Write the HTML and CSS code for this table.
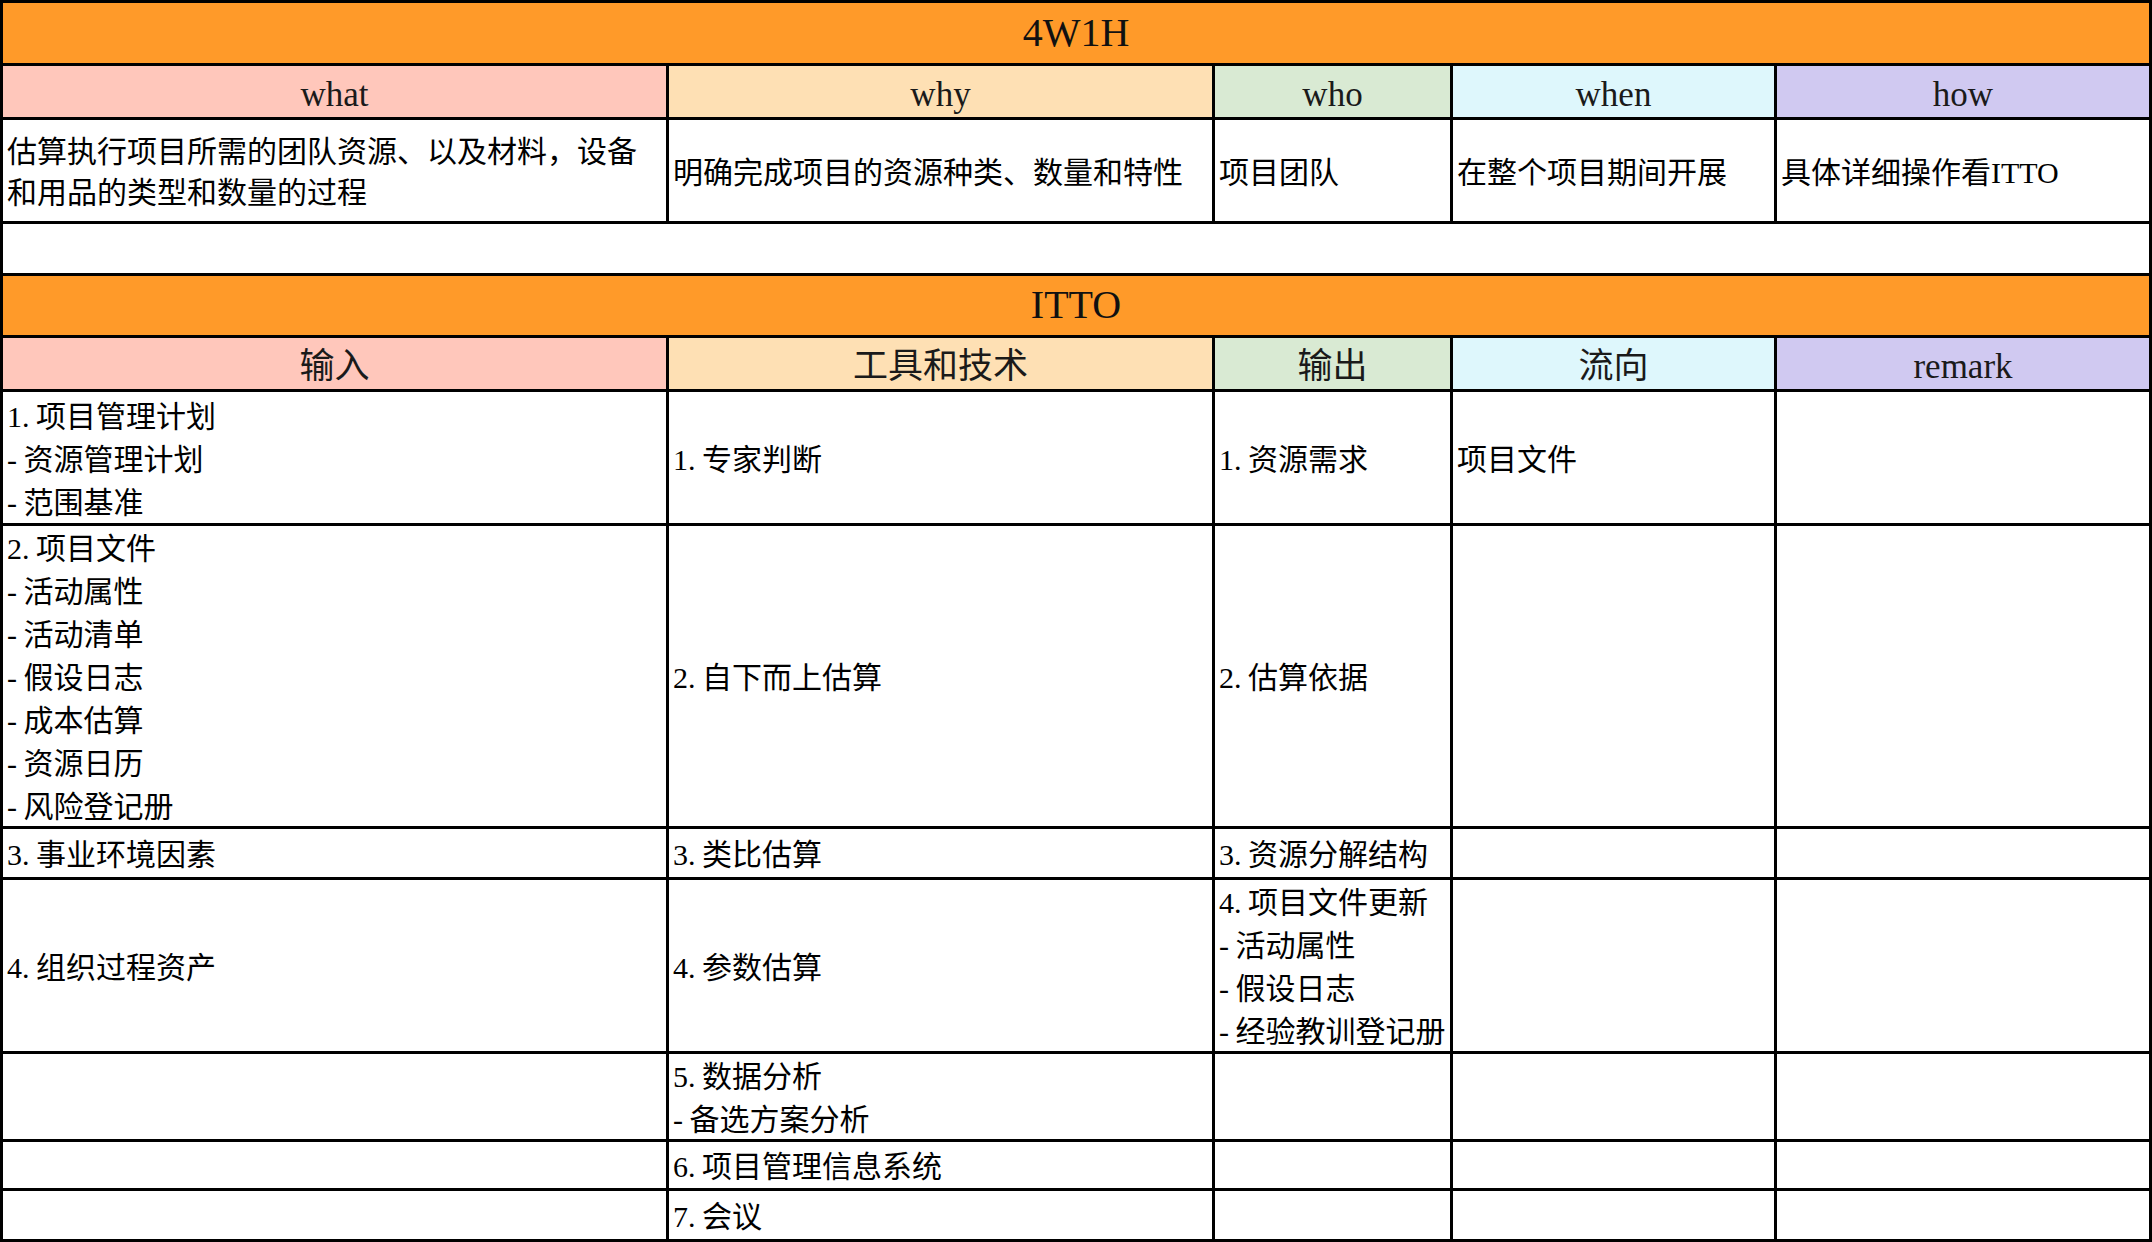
FILE: index.html
```html
<!DOCTYPE html>
<html lang="zh-CN">
<head>
<meta charset="utf-8">
<title>4W1H / ITTO</title>
<link rel="stylesheet" href="styles.css">
</head>
<body>
<div class="sheet">
  <div class="cell title">4W1H</div>

  <div class="cell hd c1">what</div>
  <div class="cell hd c2">why</div>
  <div class="cell hd c3">who</div>
  <div class="cell hd c4">when</div>
  <div class="cell hd c5">how</div>

  <div class="cell tight">估算执行项目所需的团队资源、以及材料，设备<br>和用品的类型和数量的过程</div>
  <div class="cell">明确完成项目的资源种类、数量和特性</div>
  <div class="cell">项目团队</div>
  <div class="cell">在整个项目期间开展</div>
  <div class="cell">具体详细操作看ITTO</div>

  <div class="cell span"></div>

  <div class="cell title">ITTO</div>

  <div class="cell hd c1">输入</div>
  <div class="cell hd c2">工具和技术</div>
  <div class="cell hd c3">输出</div>
  <div class="cell hd c4">流向</div>
  <div class="cell hd c5">remark</div>

  <div class="cell">1. 项目管理计划<br>- 资源管理计划<br>- 范围基准</div>
  <div class="cell">1. 专家判断</div>
  <div class="cell">1. 资源需求</div>
  <div class="cell">项目文件</div>
  <div class="cell"></div>

  <div class="cell">2. 项目文件<br>- 活动属性<br>- 活动清单<br>- 假设日志<br>- 成本估算<br>- 资源日历<br>- 风险登记册</div>
  <div class="cell">2. 自下而上估算</div>
  <div class="cell">2. 估算依据</div>
  <div class="cell"></div>
  <div class="cell"></div>

  <div class="cell">3. 事业环境因素</div>
  <div class="cell">3. 类比估算</div>
  <div class="cell">3. 资源分解结构</div>
  <div class="cell"></div>
  <div class="cell"></div>

  <div class="cell">4. 组织过程资产</div>
  <div class="cell">4. 参数估算</div>
  <div class="cell">4. 项目文件更新<br>- 活动属性<br>- 假设日志<br>- 经验教训登记册</div>
  <div class="cell"></div>
  <div class="cell"></div>

  <div class="cell"></div>
  <div class="cell">5. 数据分析<br>- 备选方案分析</div>
  <div class="cell"></div>
  <div class="cell"></div>
  <div class="cell"></div>

  <div class="cell"></div>
  <div class="cell">6. 项目管理信息系统</div>
  <div class="cell"></div>
  <div class="cell"></div>
  <div class="cell"></div>

  <div class="cell"></div>
  <div class="cell">7. 会议</div>
  <div class="cell"></div>
  <div class="cell"></div>
  <div class="cell"></div>
</div>
</body>
</html>
```

FILE: styles.css
```css
html, body {
  margin: 0;
  padding: 0;
  background: #ffffff;
}

.sheet {
  box-sizing: border-box;
  width: 2152px;
  height: 1242px;
  display: grid;
  grid-template-columns: 663px 543px 235px 321px 372px;
  grid-template-rows: 60px 51px 101px 49px 59px 51px 131px 300px 48px 171px 85px 46px 48px;
  gap: 3px;
  padding: 3px;
  background: #000000;
  font-family: "Liberation Serif", "Noto Sans CJK SC", serif;
  color: #000000;
}

.cell {
  background: #ffffff;
  display: flex;
  align-items: center;
  padding: 3px 4px 0 4px;
  font-size: 30px;
  line-height: 43px;
  word-spacing: -1px;
  white-space: nowrap;
  overflow: hidden;
}

.cell.tight {
  line-height: 41px;
}

.cell.span {
  grid-column: 1 / -1;
}

.cell.title {
  grid-column: 1 / -1;
  background: #ff9a29;
  justify-content: center;
  padding: 0 0 2px 0;
  font-size: 40px;
  color: #111111;
}

.cell.hd {
  justify-content: center;
  padding: 5px 0 0 0;
  font-size: 35px;
  color: #1a1a1a;
}

.c1 { background: #ffc7bb; }
.c2 { background: #fee0b4; }
.c3 { background: #d9ead3; }
.c4 { background: #def7fc; }
.c5 { background: #d0c9f1; }
```
